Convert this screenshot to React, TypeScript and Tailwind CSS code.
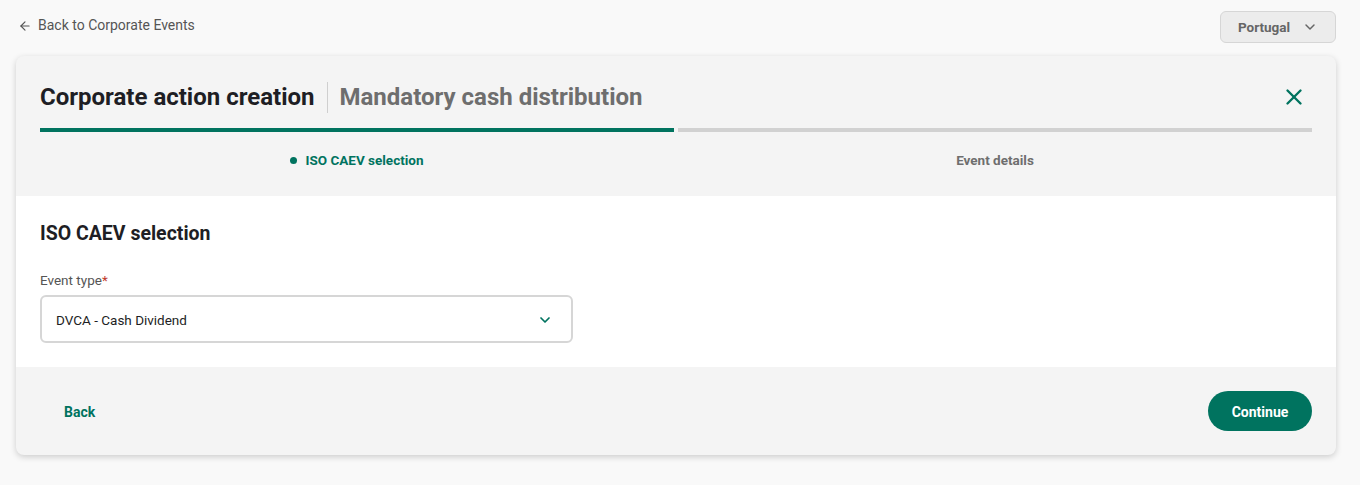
import { ArrowLeft, ChevronDown, X } from "lucide-react";

const steps = [
  { label: "ISO CAEV selection", active: true },
  { label: "Event details", active: false },
];

export default function App() {
  return (
    <div className="min-h-[485px] bg-[#f9f9f9] pl-4 pr-6 pt-[11px] font-['Roboto',sans-serif] text-[#1e1e24]">
      {/* top bar */}
      <div className="flex items-start justify-between">
        <a href="#" className="mt-[4px] flex items-center gap-[6px] pl-[2px] text-[14px] text-[#555]">
          <ArrowLeft size={14} strokeWidth={2} />
          Back to Corporate Events
        </a>
        <button className="flex h-8 w-[116px] items-center justify-center gap-3 rounded-md border border-[#d6d6d6] bg-[#ececec] text-[13.5px] font-bold text-[#666]">
          Portugal
          <ChevronDown size={16} strokeWidth={2.2} />
        </button>
      </div>

      {/* card */}
      <div className="mt-[13px] overflow-hidden rounded-lg bg-[#f4f4f4] shadow-[0_2px_6px_rgba(0,0,0,0.18)]">
        <div className="px-6 pt-[23px]">
          <div className="flex items-center justify-between">
            <div className="flex items-center">
              <h1 className="text-[24px] font-bold text-[#1e1e24]">Corporate action creation</h1>
              <div className="mx-3 h-[31px] w-px bg-[#cfcfcf]" />
              <h2 className="text-[24px] font-bold text-[#6e6e6e]">Mandatory cash distribution</h2>
            </div>
            <button className="mr-[5px] text-[#00735f]">
              <X size={26} strokeWidth={2.2} />
            </button>
          </div>
          <div className="mt-[13px] grid grid-cols-2 gap-1">
            {steps.map((s) => (
              <div key={s.label}>
                <div className={s.active ? "h-1 bg-[#00735f]" : "h-1 bg-[#d1d1d1]"} />
                <div
                  className={
                    s.active
                      ? "flex h-[64px] items-center justify-center gap-2 pb-[8px] text-[13.5px] font-bold text-[#00735f]"
                      : "flex h-[64px] items-center justify-center gap-2 pb-[8px] text-[13.5px] font-bold text-[#6e6e6e]"
                  }
                >
                  {s.active && <span className="h-[7px] w-[7px] rounded-full bg-[#00735f]" />}
                  {s.label}
                </div>
              </div>
            ))}
          </div>
        </div>

        {/* body */}
        <div className="bg-white px-6 pt-[23px] pb-[24px]">
          <h3 className="text-[19.5px] font-bold text-[#1e1e24]">ISO CAEV selection</h3>
          <label className="mt-[22px] block text-[13.5px] text-[#555]">
            Event type<span className="text-[#c0392b]">*</span>
          </label>
          <div className="mt-[4px] flex h-12 w-[533px] items-center justify-between rounded-md border-2 border-[#d6d6d6] pl-[14px] pr-[18px] pt-[3px] text-[13.5px] text-[#1e1e24]">
            DVCA - Cash Dividend
            <ChevronDown size={16} strokeWidth={2.6} className="text-[#00735f]" />
          </div>
        </div>

        {/* footer */}
        <div className="flex h-[88px] items-center justify-between pl-8 pr-6">
          <button className="px-4 pt-[4px] text-[14px] font-bold text-[#00735f]">Back</button>
          <button className="h-10 w-[104px] rounded-full bg-[#00735f] pt-[3px] text-[14px] font-bold text-white">Continue</button>
        </div>
      </div>
    </div>
  );
}
